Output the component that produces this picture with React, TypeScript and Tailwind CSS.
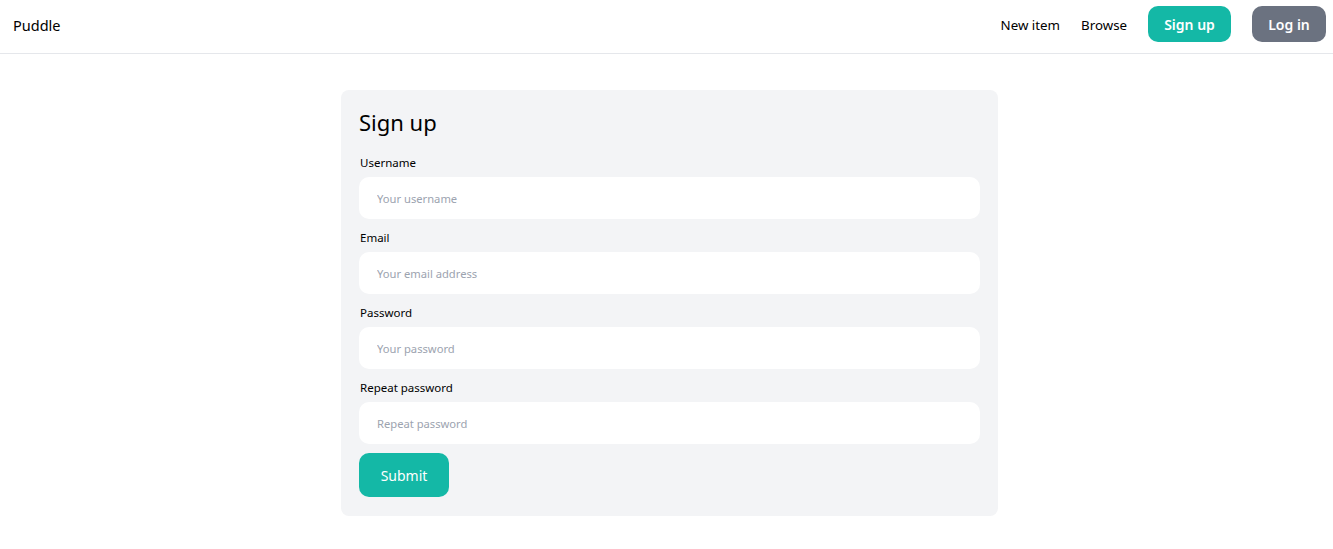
const fields = [
  { label: "Username", placeholder: "Your username", type: "text" },
  { label: "Email", placeholder: "Your email address", type: "email" },
  { label: "Password", placeholder: "Your password", type: "password" },
  { label: "Repeat password", placeholder: "Repeat password", type: "password" },
];

const Navbar = () => {
  return (
    <nav className="flex justify-between items-center h-[54px] pl-[13px] pr-[7px] pb-[5px] border-b border-gray-200">
      <a href="#" className="text-[14.5px] leading-[24px] pt-[2px] text-black">
        Puddle
      </a>
      <div className="flex items-center gap-[21px]">
        <a href="#" className="text-[13.3px] leading-[24px] pt-[2px] text-black">
          New item
        </a>
        <a href="#" className="text-[13.3px] leading-[24px] pt-[2px] text-black">
          Browse
        </a>
        <a
          href="#"
          className="flex items-center justify-center w-[83px] h-[36px] rounded-[10px] bg-[#14b8a6] text-white text-[14px] font-semibold"
        >
          Sign up
        </a>
        <a
          href="#"
          className="flex items-center justify-center w-[74px] h-[36px] rounded-[10px] bg-[#6b7280] text-white text-[14px] font-semibold"
        >
          Log in
        </a>
      </div>
    </nav>
  );
};

export default function App() {
  return (
    <div className="min-h-screen bg-white text-black font-['Noto_Sans',sans-serif]">
      <Navbar />
      <div className="pl-[6px] pt-[36px]">
        <div className="mx-auto w-[657px] bg-[#f3f4f6] rounded-lg p-[18px] pb-[19px]">
          <h1 className="text-[22px] leading-[28px] mb-[16px]">Sign up</h1>
          <form className="flex flex-col" onSubmit={(e) => e.preventDefault()}>
            {fields.map((f) => (
              <div key={f.label} className="mb-[8px]">
                <label className="block text-[11.5px] leading-[20px] pt-px mb-[4px] pl-px">
                  {f.label}
                </label>
                <input
                  type={f.type}
                  placeholder={f.placeholder}
                  className="w-full h-[42px] px-[18px] rounded-[10px] bg-white text-[11.2px] placeholder:text-[#9ca3af] outline-none"
                />
              </div>
            ))}
            <button
              type="submit"
              className="mt-px w-[90px] h-[44px] rounded-[10px] bg-[#14b8a6] text-white text-[14px]"
            >
              Submit
            </button>
          </form>
        </div>
      </div>
    </div>
  );
}
